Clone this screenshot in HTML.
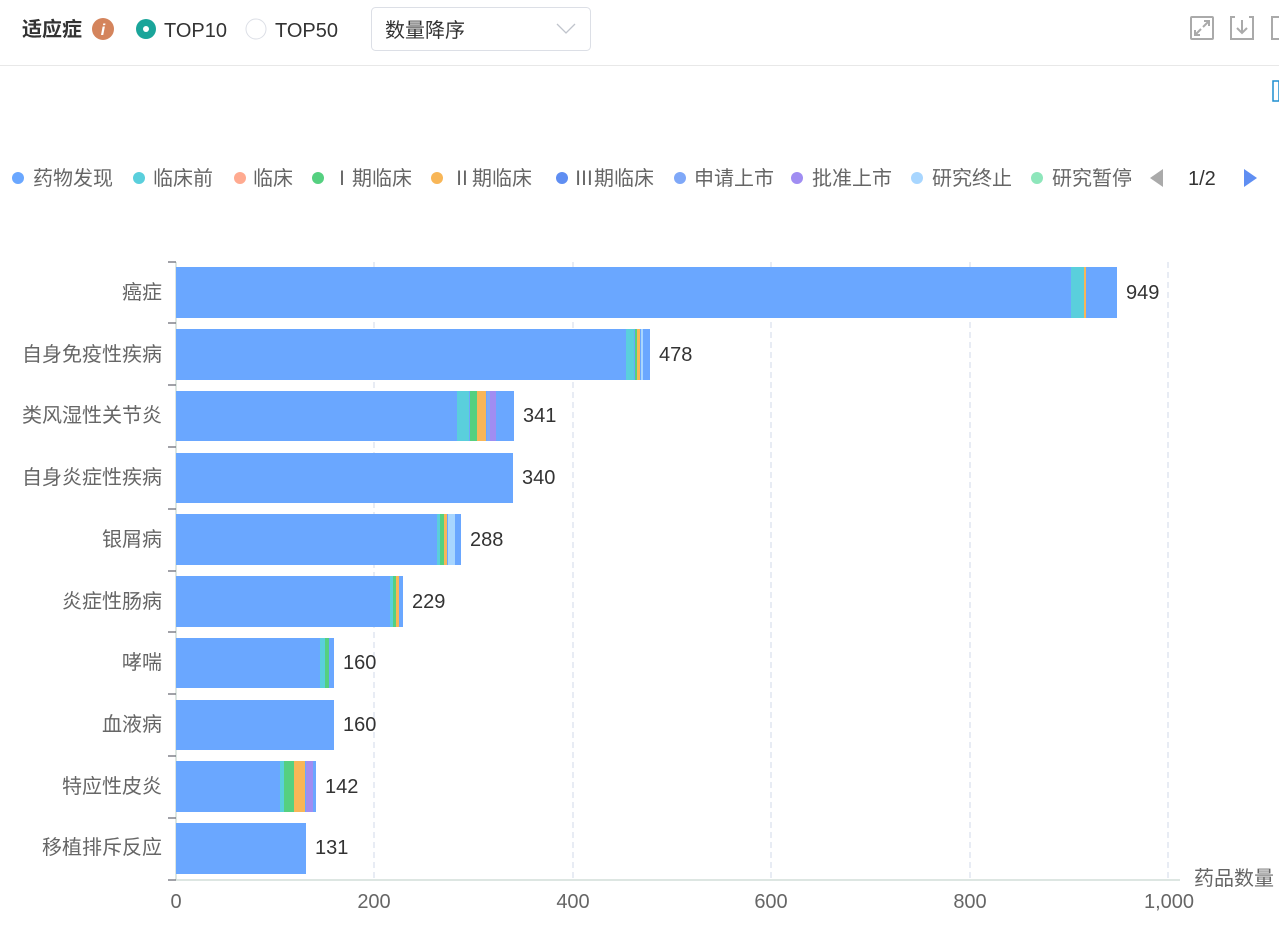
<!DOCTYPE html>
<html><head><meta charset="utf-8"><style>
body{margin:0;background:#fff;width:1279px;height:922px;overflow:hidden;font-family:"Liberation Sans","Noto Sans CJK SC",sans-serif;}
svg text{font-family:"Liberation Sans","Noto Sans CJK SC",sans-serif;}
</style></head><body>
<svg width="1279" height="922" viewBox="0 0 1279 922" xmlns="http://www.w3.org/2000/svg">
<!-- header -->
<text x="22" y="36" font-size="20" font-weight="bold" fill="#333">适应症</text>
<circle cx="103" cy="29" r="11" fill="#d4845c"/>
<text x="103" y="35" font-size="16" font-style="italic" font-weight="bold" fill="#fff" text-anchor="middle" font-family="Liberation Serif">i</text>
<circle cx="146" cy="29" r="10" fill="#1aa59a"/>
<circle cx="146" cy="29" r="3" fill="#fff"/>
<text x="164" y="37" font-size="20" fill="#333">TOP10</text>
<circle cx="256" cy="29" r="10" fill="#fff" stroke="#dcdfe6"/>
<text x="275" y="37" font-size="20" fill="#333">TOP50</text>
<rect x="371.5" y="7.5" width="219" height="43" rx="4" fill="#fff" stroke="#dcdfe6"/>
<text x="385" y="37" font-size="20" fill="#333">数量降序</text>
<path d="M557 24 L566 33 L575 24" fill="none" stroke="#c0c4cc" stroke-width="1.3"/>
<g fill="none" stroke="#aaa" stroke-width="2">
<rect x="1191" y="17" width="22" height="22" rx="1"/>
<path d="M1201 29 L1195 35 M1195 30 V35 H1200 M1203 27 L1209 21 M1204 21 H1209 V26"/>
<path d="M1235 17 H1231 V39 H1253 V17 H1249 M1242 20 V33 M1237 28 L1242 33 L1247 28"/>
<path d="M1279 17 H1272 V39 H1279"/>
</g>
<line x1="0" y1="65.5" x2="1279" y2="65.5" stroke="#e8e8e8"/>
<rect x="1273" y="81" width="6" height="20" fill="none" stroke="#1f8fd0" stroke-width="1.5"/>
<!-- legend -->
<g font-size="20" fill="#666">
<circle cx="18" cy="178" r="6" fill="#6aa7ff"/><text x="33" y="185">药物发现</text>
<circle cx="139" cy="178" r="6" fill="#5acfdc"/><text x="153" y="185">临床前</text>
<circle cx="240" cy="178" r="6" fill="#ffaa90"/><text x="253" y="185">临床</text>
<circle cx="318" cy="178" r="6" fill="#55d080"/><text x="332" y="185">Ⅰ期临床</text>
<circle cx="437" cy="178" r="6" fill="#f8b657"/><text x="452" y="185">Ⅱ期临床</text>
<circle cx="562" cy="178" r="6" fill="#5f8ef2"/><text x="574" y="185">Ⅲ期临床</text>
<circle cx="680" cy="178" r="6" fill="#7fa8f8"/><text x="694" y="185">申请上市</text>
<circle cx="797" cy="178" r="6" fill="#a08df2"/><text x="812" y="185">批准上市</text>
<circle cx="917" cy="178" r="6" fill="#a8d6ff"/><text x="932" y="185">研究终止</text>
<circle cx="1037" cy="178" r="6" fill="#8ee6bb"/><text x="1052" y="185">研究暂停</text>
</g>
<path d="M1150 178 L1163 169 V187 Z" fill="#aaa"/>
<text x="1188" y="185" font-size="20" fill="#333">1/2</text>
<path d="M1257 178 L1244 169 V187 Z" fill="#5f8ef2"/>
<!-- grid -->
<g stroke="#e0e6f1" stroke-dasharray="6,4" stroke-width="1.5">
<line x1="374" y1="262" x2="374" y2="880"/><line x1="573" y1="262" x2="573" y2="880"/>
<line x1="771" y1="262" x2="771" y2="880"/><line x1="970" y1="262" x2="970" y2="880"/>
<line x1="1168" y1="262" x2="1168" y2="880"/>
</g>
<line x1="176" y1="262" x2="176" y2="880" stroke="#d2ddd9" stroke-width="1.5"/>
<line x1="176" y1="880" x2="1180" y2="880" stroke="#d2ddd9" stroke-width="1.5"/>
<g stroke="#6e7079" stroke-width="1.3">
<line x1="168" y1="262" x2="176" y2="262"/><line x1="168" y1="323" x2="176" y2="323"/>
<line x1="168" y1="385" x2="176" y2="385"/><line x1="168" y1="447" x2="176" y2="447"/>
<line x1="168" y1="509" x2="176" y2="509"/><line x1="168" y1="571" x2="176" y2="571"/>
<line x1="168" y1="632" x2="176" y2="632"/><line x1="168" y1="694" x2="176" y2="694"/>
<line x1="168" y1="756" x2="176" y2="756"/><line x1="168" y1="818" x2="176" y2="818"/>
<line x1="168" y1="880" x2="176" y2="880"/>
</g>
<!-- y labels -->
<g font-size="20" fill="#666" text-anchor="end">
<text x="162" y="299">癌症</text><text x="162" y="361">自身免疫性疾病</text>
<text x="162" y="422">类风湿性关节炎</text><text x="162" y="484">自身炎症性疾病</text>
<text x="162" y="546">银屑病</text><text x="162" y="608">炎症性肠病</text>
<text x="162" y="669">哮喘</text><text x="162" y="731">血液病</text>
<text x="162" y="793">特应性皮炎</text><text x="162" y="854">移植排斥反应</text>
</g>
<g font-size="20" fill="#666" text-anchor="middle">
<text x="176" y="908">0</text><text x="374" y="908">200</text><text x="573" y="908">400</text>
<text x="771" y="908">600</text><text x="970" y="908">800</text><text x="1169" y="908">1,000</text>
</g>
<text x="1194" y="885" font-size="20" fill="#666">药品数量</text>
<!-- bars -->
<g>
<rect x="176" y="267" width="941" height="51" fill="#6aa7ff"/>
<rect x="1071" y="267" width="13" height="51" fill="#5acfdc"/><rect x="1084" y="267" width="2" height="51" fill="#f8b657"/>
<rect x="176" y="329" width="474" height="51" fill="#6aa7ff"/>
<rect x="626" y="329" width="8" height="51" fill="#5acfdc"/><rect x="635" y="329" width="2" height="51" fill="#55d080"/><rect x="637" y="329" width="3" height="51" fill="#f8b657"/><rect x="641" y="329" width="2" height="51" fill="#a8d6ff"/>
<rect x="176" y="391" width="338" height="50" fill="#6aa7ff"/>
<rect x="457" y="391" width="12" height="50" fill="#5acfdc"/><rect x="470" y="391" width="7" height="50" fill="#55d080"/><rect x="477" y="391" width="9" height="50" fill="#f8b657"/><rect x="487" y="391" width="3" height="50" fill="#7fa8f8"/><rect x="490" y="391" width="6" height="50" fill="#a08df2"/>
<rect x="176" y="453" width="337" height="50" fill="#6aa7ff"/>
<rect x="176" y="514" width="285" height="51" fill="#6aa7ff"/>
<rect x="437" y="514" width="3" height="51" fill="#5acfdc"/><rect x="440" y="514" width="4" height="51" fill="#55d080"/><rect x="444" y="514" width="3" height="51" fill="#f8b657"/><rect x="448" y="514" width="7" height="51" fill="#a8d6ff"/>
<rect x="176" y="576" width="227" height="51" fill="#6aa7ff"/>
<rect x="390" y="576" width="3" height="51" fill="#5acfdc"/><rect x="393" y="576" width="3" height="51" fill="#55d080"/><rect x="396" y="576" width="3" height="51" fill="#f8b657"/>
<rect x="176" y="638" width="158" height="50" fill="#6aa7ff"/>
<rect x="320" y="638" width="5" height="50" fill="#5acfdc"/><rect x="325" y="638" width="4" height="50" fill="#55d080"/>
<rect x="176" y="700" width="158" height="50" fill="#6aa7ff"/>
<rect x="176" y="761" width="140" height="51" fill="#6aa7ff"/>
<rect x="280" y="761" width="4" height="51" fill="#5acfdc"/><rect x="284" y="761" width="10" height="51" fill="#55d080"/><rect x="294" y="761" width="11" height="51" fill="#f8b657"/><rect x="306" y="761" width="7" height="51" fill="#a08df2"/>
<rect x="176" y="823" width="130" height="51" fill="#6aa7ff"/>
</g>
<g font-size="20" fill="#333">
<text x="1126" y="299">949</text><text x="659" y="361">478</text><text x="523" y="422">341</text>
<text x="522" y="484">340</text><text x="470" y="546">288</text><text x="412" y="608">229</text>
<text x="343" y="669">160</text><text x="343" y="731">160</text><text x="325" y="793">142</text>
<text x="315" y="854">131</text>
</g>
</svg>
</body></html>
